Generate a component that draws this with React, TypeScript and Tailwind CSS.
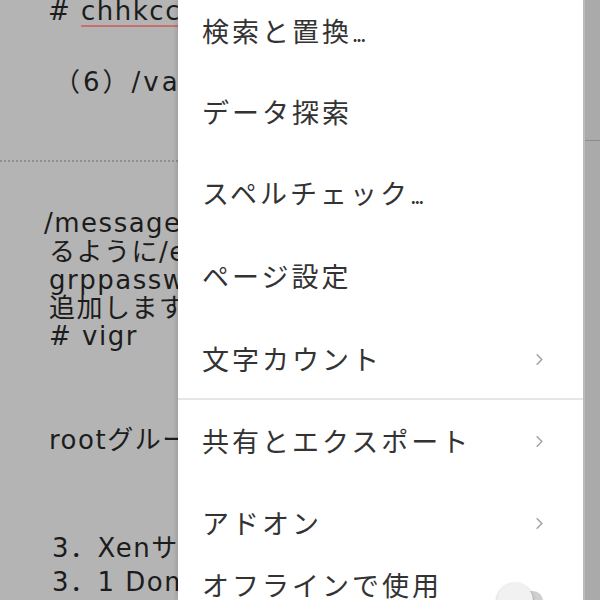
import { ChevronRight } from "lucide-react";

const docFont = {
    fontFamily: '"DejaVu Sans", "Noto Sans CJK JP", sans-serif',
};
const menuFont = { fontFamily: '"Noto Sans CJK JP", "Noto Sans", sans-serif' };

type Item = { label: string; dots?: boolean; sub?: boolean };

const topItems: Item[] = [
    { label: "検索と置換", dots: true },
    { label: "データ探索" },
    { label: "スペルチェック", dots: true },
    { label: "ページ設定" },
    { label: "文字カウント", sub: true },
];

const bottomItems: Item[] = [
    { label: "共有とエクスポート", sub: true },
    { label: "アドオン", sub: true },
];

function MenuRow({ item }: { item: Item }) {
    return (
        <div className="h-[81px] flex items-center justify-between pl-[24px] pr-[34px]">
            <span className="text-[27px] tracking-[3px] text-[#333]">
                {item.label}
                {item.dots && <span className="tracking-[-2px] text-[22px]">...</span>}
            </span>
            {item.sub && (
                <ChevronRight
                    size={19}
                    strokeWidth={2}
                    className="text-[#a3a3a3]"
                />
            )}
        </div>
    );
}

function Document() {
    return (
        <div
            className="w-[178px] shrink-0 overflow-hidden whitespace-nowrap bg-[#b4b4b4] text-[#1c1c1c] text-[26px] leading-[28px] tracking-[1.5px]"
            style={docFont}
        >
            <div className="pl-[48px] -mt-[3px]">
                # <span className="underline decoration-[#c9706c] decoration-2 underline-offset-[5px]">chhkcconfig</span>
            </div>
            <div className="pl-[54px] mt-[43px] tracking-[3px]">（6）/var/log</div>
            <div className="mt-[64px] border-t-2 border-dotted border-[#8f8f8f]" />
            <div className="pl-[46px] mt-[46px] flex flex-col">
                <div className="flex items-center">
                    <span className="w-[2px] h-[30px] bg-[#222] -mr-[2px]" />
                    <span>/messages</span>
                </div>
                <div className="pl-[3px]">るように/etc/</div>
                <div className="pl-[3px]">grppasswd</div>
                <div className="pl-[3px]">追加します</div>
                <div className="pl-[3px]"># vigr</div>
            </div>
            <div className="pl-[49px] mt-[76px]">rootグループ</div>
            <div className="pl-[52px] mt-[80px]">3．Xenサーバ</div>
            <div className="pl-[52px] mt-[6px]">3．1 Dom0</div>
        </div>
    );
}

export default function App() {
    return (
        <div className="w-[600px] h-[600px] overflow-hidden flex bg-[#b4b4b4]">
            <Document />
            <div
                className="w-[405px] shrink-0 bg-white shadow-[-2px_0_4px_rgba(0,0,0,0.12)] relative"
                style={menuFont}
            >
                <div className="-mt-[9px]">
                    {topItems.map((it, i) => (
                        <div key={it.label} className={i >= 3 ? "mt-[2px]" : ""}>
                            <MenuRow item={it} />
                        </div>
                    ))}
                </div>
                <div className="-mt-[2px] border-t-2 border-[#e6e6e6] pt-[1px]">
                    {bottomItems.map((it) => (
                        <div key={it.label} className="h-[82px]">
                            <MenuRow item={it} />
                        </div>
                    ))}
                    <div className="flex items-start justify-between pl-[24px] pr-[40px] pt-[2px]">
                        <div>
                            <div className="text-[27px] tracking-[3px] text-[#333] leading-[36px]">
                                オフラインで使用
                            </div>
                            <div className="text-[18px] text-[#777]">
                                オフラインで作業
                            </div>
                        </div>
                        <div className="mt-[24px] relative w-[44px] h-[20px] rounded-full bg-[#cfcfcf]">
                            <span className="absolute -left-[2px] -top-[8px] w-[36px] h-[36px] rounded-full bg-[#f1f1f1] shadow-[0_1px_3px_rgba(0,0,0,0.35)]" />
                        </div>
                    </div>
                </div>
            </div>
            <div className="flex-1 bg-[#aaaaaa] border-l-2 border-[#bdbdbd] flex flex-col">
                <div className="mt-[140px] border-t border-[#8c8c8c]" />
            </div>
        </div>
    );
}
